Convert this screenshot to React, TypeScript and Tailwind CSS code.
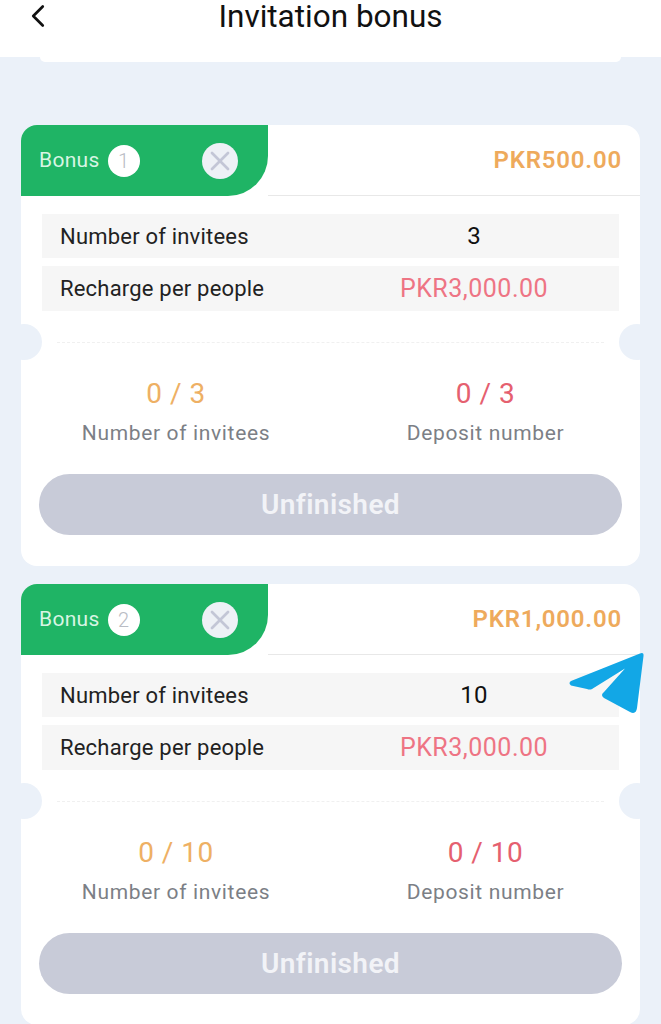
import { ChevronLeft, X } from "lucide-react";

type BonusCardProps = {
  index: number;
  reward: string;
  invitees: number;
};

const BonusCard = ({ index, reward, invitees }: BonusCardProps) => {
  return (
    <div className="relative h-[441px] shrink-0 overflow-hidden rounded-2xl bg-white">
      <div className="flex h-[71px]">
        <div className="flex w-[247px] items-center rounded-br-[40px] bg-[#1fb465] pl-[18px]">
          <span className="text-[21px] tracking-[0.3px] text-[#d8f5e3]">Bonus</span>
          <span className="ml-2 flex h-8 w-8 items-center justify-center rounded-full bg-white text-[20px] font-light text-[#b9bcc4]">
            {index}
          </span>
          <span className="ml-[62px] flex h-9 w-9 items-center justify-center rounded-full bg-[#eef1f6]">
            <X className="h-8 w-8 text-[#c3c6d6]" strokeWidth={2} />
          </span>
        </div>
        <div className="flex flex-1 items-center justify-end border-b border-[#e8e8e8] pr-[18px] text-[24px] font-semibold tracking-[0.8px] text-[#eeaa5c]">
          {reward}
        </div>
      </div>

      <div className="mt-[18px] flex flex-col gap-2 px-[21px]">
        <div className="flex h-[44px] items-center bg-[#f6f6f6] pl-[18px] text-[22px] tracking-[0.2px] text-[#222]">
          <span className="w-[290px]">Number of invitees</span>
          <span className="w-[248px] text-center text-[24px] text-[#111]">{invitees}</span>
        </div>
        <div className="flex h-[45px] items-center bg-[#f6f6f6] pl-[18px] text-[22px] tracking-[0.2px] text-[#222]">
          <span className="w-[290px]">Recharge per people</span>
          <span className="w-[248px] text-center text-[25px] tracking-[0.5px] text-[#ee7484]">PKR3,000.00</span>
        </div>
      </div>

      <div className="mx-[36px] mt-[31px] border-t border-dashed border-[#f0f0f0]" />

      <div className="mt-[32px] flex">
        <div className="flex w-[310px] flex-col items-center">
          <span className="text-[28px] leading-[38px] tracking-[0.5px] text-[#eeb064]">0 / {invitees}</span>
          <span className="mt-[7px] text-[21px] leading-[26px] tracking-[0.65px] text-[#7c7f86]">Number of invitees</span>
        </div>
        <div className="flex w-[309px] flex-col items-center">
          <span className="text-[28px] leading-[38px] tracking-[0.5px] text-[#e5606f]">0 / {invitees}</span>
          <span className="mt-[7px] text-[21px] leading-[26px] tracking-[0.65px] text-[#7c7f86]">Deposit number</span>
        </div>
      </div>

      <div className="mx-[18px] mt-[28px] flex h-[61px] items-center justify-center rounded-full bg-[#c8cbd8] text-[28px] font-semibold tracking-[0.4px] text-[#f2f3f7]">
        Unfinished
      </div>

      <span className="absolute left-[-15px] top-[199px] h-9 w-9 rounded-full bg-[#ebf1f9]" />
      <span className="absolute right-[-15px] top-[199px] h-9 w-9 rounded-full bg-[#ebf1f9]" />
    </div>
  );
};

const App = () => {
  return (
    <div
      className="relative h-[1024px] w-[661px] overflow-hidden bg-[#ebf1f9]"
      style={{ fontFamily: "Roboto, 'Liberation Sans', sans-serif" }}
    >
      <div className="relative flex h-[57px] items-start justify-center bg-white">
        <ChevronLeft className="absolute left-[19px] top-[-3px] h-[38px] w-[38px] text-[#111]" strokeWidth={1.7} />
        <h1 className="text-[31.5px] leading-[34px] text-[#111]">Invitation bonus</h1>
      </div>
      <div className="mx-[40px] h-[5px] rounded-b-xl bg-white" />

      <div className="mt-[63px] flex flex-col gap-[18px] px-[21px]">
        <BonusCard index={1} reward="PKR500.00" invitees={3} />
        <BonusCard index={2} reward="PKR1,000.00" invitees={10} />
      </div>

      <svg className="absolute left-[568px] top-[651px] h-[64px] w-[76px]" viewBox="0 0 76 64">
        <path
          d="M72 2.5Q76 1 75.5 5L69 57Q68 64 62 61L36 47Q32 44 36 41L57 17.5 24 38Q22 39 19 38L3 34.5Q0 32 3 30Z"
          fill="#12a7e6"
        />
      </svg>
    </div>
  );
};

export default App;
